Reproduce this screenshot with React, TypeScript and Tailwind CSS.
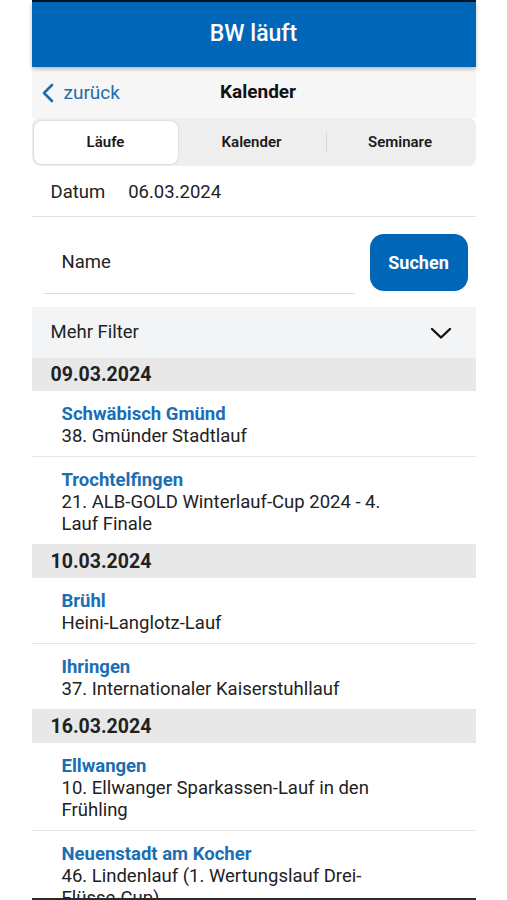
import React from "react";

type Item = { city: string; title: string };
type Group = { date: string; items: Item[] };

const groups: Group[] = [
  {
    date: "09.03.2024",
    items: [
      { city: "Schwäbisch Gmünd", title: "38. Gmünder Stadtlauf" },
      { city: "Trochtelfingen", title: "21. ALB-GOLD Winterlauf-Cup 2024 - 4. Lauf Finale" },
    ],
  },
  {
    date: "10.03.2024",
    items: [
      { city: "Brühl", title: "Heini-Langlotz-Lauf" },
      { city: "Ihringen", title: "37. Internationaler Kaiserstuhllauf" },
    ],
  },
  {
    date: "16.03.2024",
    items: [
      { city: "Ellwangen", title: "10. Ellwanger Sparkassen-Lauf in den Frühling" },
      { city: "Neuenstadt am Kocher", title: "46. Lindenlauf (1. Wertungslauf Drei-Flüsse-Cup)" },
    ],
  },
];

export default function App() {
  return (
    <div
      className="w-[507px] h-[900px] bg-white flex justify-center overflow-hidden"
      style={{ fontFamily: "Roboto, 'Noto Sans', 'Liberation Sans', sans-serif" }}
    >
      <div className="w-[444px] h-[900px] flex flex-col bg-white">
        <div className="h-[2px] bg-[#0b1222] shrink-0" />
        <div className="h-[65px] shrink-0 bg-[#0067b8] flex items-center justify-center text-white text-[23px] font-medium relative z-10 shadow-[0_2px_4px_rgba(0,0,0,0.25)]">
          BW läuft
        </div>
        <div className="h-[51px] shrink-0 bg-[#f6f6f6] flex items-center">
          <div className="flex-1 flex items-center pl-[9px] text-[#1f6db0]">
            <svg width="16" height="20" viewBox="0 0 16 20" fill="none">
              <path d="M11 2 L3 10 L11 18" stroke="#1f6db0" strokeWidth="2.6" strokeLinecap="round" strokeLinejoin="round" />
            </svg>
            <span className="ml-[7px] text-[19px] leading-none">zurück</span>
          </div>
          <div className="text-[19px] font-bold text-[#111]">Kalender</div>
          <div className="flex-1" />
        </div>
        <div className="h-[48px] shrink-0 bg-[#eeeeee] rounded-[8px] p-[2px] flex items-center">
          <div className="w-[144px] h-[43px] bg-white rounded-[8px] shadow-[0_0_2px_rgba(0,0,0,0.2)] flex items-center justify-center text-[15px] font-semibold text-[#1a1a1a]">
            Läufe
          </div>
          <div className="flex-1 h-full flex items-center justify-center text-[15px] font-semibold text-[#1a1a1a]">
            Kalender
          </div>
          <div className="w-px h-[20px] bg-[#d8d8d8]" />
          <div className="w-[147px] h-full flex items-center justify-center text-[15px] font-semibold text-[#1a1a1a]">
            Seminare
          </div>
        </div>
        <div className="h-[51px] shrink-0 flex items-center pt-[3px] border-b border-[#e2e2e2] text-[18.5px] text-[#222]">
          <span className="ml-[19px]">Datum</span>
          <span className="ml-[23px]">06.03.2024</span>
        </div>
        <div className="h-[90px] shrink-0 flex items-start">
          <div className="ml-[12px] w-[311px] h-[77px] border-b border-[#dcdcdc] flex items-center pl-[18px] pt-[15px] text-[18.5px] text-[#222]">
            Name
          </div>
          <div className="ml-[15px] mt-[17px] w-[98px] h-[57px] rounded-[14px] bg-[#0067b8] flex items-center justify-center text-white text-[18px] font-bold">
            Suchen
          </div>
        </div>
        <div className="h-[51px] shrink-0 bg-[#f3f4f6] flex items-center justify-between pl-[19px] pr-[24px] pt-[1px] text-[18.5px] text-[#222]">
          <span>Mehr Filter</span>
          <svg width="22" height="14" viewBox="0 0 22 14" fill="none">
            <path d="M2 3 L11 11.5 L20 3" stroke="#111" strokeWidth="2.4" strokeLinecap="round" strokeLinejoin="round" />
          </svg>
        </div>
        <div className="flex-1 min-h-0 overflow-hidden flex flex-col">
          {groups.map((g) => (
            <div key={g.date} className="flex flex-col">
              <div className="h-[33px] shrink-0 bg-[#e8e8e8] flex items-center pl-[19px] text-[19.5px] font-bold text-[#222]">
                {g.date}
              </div>
              {g.items.map((it) => (
                <div key={it.city} className="pl-[30px] pt-[11.5px] pb-[9.5px] border-b border-[#e6e6e6]">
                  <div className="text-[18.5px] leading-[22px] font-bold text-[#1b6eb3]">{it.city}</div>
                  <div className="w-[340px] text-[18.5px] leading-[22px] text-[#222]">{it.title}</div>
                </div>
              ))}
            </div>
          ))}
        </div>
        <div className="h-[2px] shrink-0 bg-[#2a2a2a]" />
      </div>
    </div>
  );
}
